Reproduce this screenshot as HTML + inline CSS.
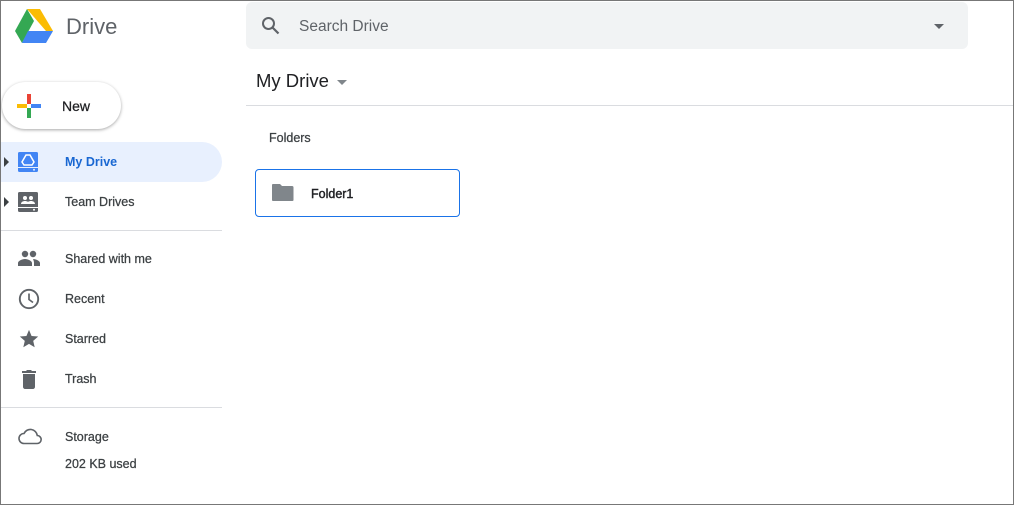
<!DOCTYPE html>
<html><head><meta charset="utf-8"><style>
*{margin:0;padding:0;box-sizing:border-box}
html,body{width:1014px;height:505px;overflow:hidden;background:#fff;font-family:"Liberation Sans",sans-serif}
.frame{position:absolute;left:0;top:0;width:1014px;height:505px;border:1px solid #777}
.abs{position:absolute}
.nav{position:absolute;left:65px;font-size:12.5px;color:#3c4043;-webkit-text-stroke:0.25px #3c4043}
.ic{position:absolute;left:18px}
</style></head><body>
<div class="frame"></div>
<svg class="abs" style="left:15px;top:9px" width="38" height="34" viewBox="0 0 38 34">
<polygon points="12,0 25,0 38,22 31,22" fill="#fbbc04"/>
<polygon points="12,0 19,12 7,34 0,22" fill="#34a853"/>
<polygon points="7,34 13,22 38,22 31,34" fill="#4285f4"/>
</svg>
<div class="abs" style="left:66px;top:14px;font-size:22px;color:#5f6368">Drive</div>
<div class="abs" style="left:2px;top:82px;width:119px;height:47px;border-radius:24px;background:#fff;box-shadow:0 1px 3px rgba(0,0,0,.35)"></div>
<svg class="abs" style="left:17px;top:94px" width="24" height="24" viewBox="0 0 24 24">
<rect x="10" y="0" width="4" height="10" fill="#ea4335"/>
<rect x="14" y="10" width="10" height="4" fill="#4285f4"/>
<rect x="10" y="14" width="4" height="10" fill="#34a853"/>
<rect x="0" y="10" width="10" height="4" fill="#fbbc04"/>
</svg>
<div class="abs" style="left:62px;top:98px;font-size:14px;color:#202124;-webkit-text-stroke:0.25px #202124">New</div>
<div class="abs" style="left:1px;top:142px;width:221px;height:40px;background:#e8f0fe;border-radius:0 20px 20px 0"></div>
<div class="abs" style="left:4px;top:157px;width:0;height:0;border-left:5px solid #3c4043;border-top:5px solid transparent;border-bottom:5px solid transparent"></div>
<svg class="ic" style="top:152px" width="20" height="20" viewBox="0 0 20 20">
<rect x="0" y="0" width="20" height="20" rx="1.5" fill="#4285f4"/>
<rect x="0" y="15" width="20" height="1" fill="#e8f0fe"/>
<circle cx="16" cy="17.7" r="1" fill="#e8f0fe"/>
<polygon points="8,3 12,3 16,10 14,13 6,13 4,10" fill="none" stroke="#fff" stroke-width="1.5"/>
</svg>
<div class="nav" style="top:155px;color:#1967d2;font-weight:bold;-webkit-text-stroke:0">My Drive</div>
<div class="abs" style="left:4px;top:197px;width:0;height:0;border-left:5px solid #3c4043;border-top:5px solid transparent;border-bottom:5px solid transparent"></div>
<svg class="ic" style="top:192px" width="20" height="20" viewBox="0 0 20 20">
<rect x="0" y="0" width="20" height="20" rx="1.5" fill="#5f6368"/>
<rect x="0" y="15" width="20" height="1" fill="#fff"/>
<circle cx="16" cy="17.7" r="1" fill="#fff"/>
<circle cx="7" cy="6" r="2" fill="#fff"/><circle cx="13" cy="6" r="2" fill="#fff"/>
<path d="M3 12c0-2 2-3 4-3s4 1 4 3zM9 12c0-2 2-3 4-3s4 1 4 3z" fill="#fff"/>
</svg>
<div class="nav" style="top:195px">Team Drives</div>
<div class="abs" style="left:1px;top:230px;width:221px;height:1px;background:#dadce0"></div>
<svg class="ic" style="top:250px" width="22" height="16" viewBox="0 0 22 16">
<circle cx="7" cy="4" r="3.2" fill="#5f6368"/><circle cx="15" cy="4" r="3.2" fill="#5f6368"/>
<path d="M0 16v-3c0-2 4-4 7-4s7 2 7 4v3zM15 9c3 0 7 2 7 4v3h-6v-3c0-1.5-.5-3-1-4z" fill="#5f6368"/>
</svg>
<div class="nav" style="top:252px">Shared with me</div>
<svg class="ic" style="top:288px" width="22" height="22" viewBox="0 0 22 22">
<circle cx="11" cy="11" r="9.2" fill="none" stroke="#5f6368" stroke-width="1.9"/>
<path d="M11 5.5v6l4 3" fill="none" stroke="#5f6368" stroke-width="1.7"/>
</svg>
<div class="nav" style="top:292px">Recent</div>
<svg class="ic" style="top:328px" width="22" height="22" viewBox="0 0 24 24">
<path d="M12 17.3l6.2 3.7-1.6-7 5.4-4.7-7.2-.6L12 2 9.2 8.7 2 9.3l5.4 4.7-1.6 7z" fill="#5f6368"/>
</svg>
<div class="nav" style="top:332px">Starred</div>
<svg class="ic" style="top:368px" width="22" height="22" viewBox="0 0 22 22">
<path d="M4 3h4l1-1h4l1 1h4v2H4zM5 6h12v13c0 1-1 2-2 2H7c-1 0-2-1-2-2z" fill="#5f6368"/>
</svg>
<div class="nav" style="top:372px">Trash</div>
<div class="abs" style="left:1px;top:407px;width:221px;height:1px;background:#dadce0"></div>
<svg class="ic" style="top:427px" width="24" height="18" viewBox="0 0 24 18">
<path d="M6 16.5h13a4 4 0 0 0 .3-8A7 7 0 0 0 6 6.5a5 5 0 0 0 0 10z" fill="none" stroke="#5f6368" stroke-width="1.6"/>
</svg>
<div class="nav" style="top:430px">Storage</div>
<div class="nav" style="top:457px">202 KB used</div>
<div class="abs" style="left:246px;top:2px;width:722px;height:47px;background:#f1f3f4;border-radius:6px"></div>
<svg class="abs" style="left:261px;top:16px" width="20" height="20" viewBox="0 0 20 20">
<circle cx="7.5" cy="7.5" r="5.5" fill="none" stroke="#5f6368" stroke-width="2"/>
<path d="M11.5 11.5l6 6" stroke="#5f6368" stroke-width="2.2"/>
</svg>
<div class="abs" style="left:299px;top:18px;font-size:15.5px;color:#5f6368">Search Drive</div>
<div class="abs" style="left:934px;top:24px;border-top:5px solid #5f6368;border-left:5px solid transparent;border-right:5px solid transparent"></div>
<div class="abs" style="left:256px;top:70px;font-size:18.5px;color:#202124">My Drive</div>
<div class="abs" style="left:337px;top:80px;border-top:5px solid #80868b;border-left:5px solid transparent;border-right:5px solid transparent"></div>
<div class="abs" style="left:246px;top:105px;width:767px;height:1px;background:#dadce0"></div>
<div class="abs" style="left:269px;top:131px;font-size:12.5px;color:#3c4043;-webkit-text-stroke:0.25px #3c4043">Folders</div>
<div class="abs" style="left:255px;top:169px;width:205px;height:48px;border:1px solid #1a73e8;border-radius:4px"></div>
<svg class="abs" style="left:272px;top:184px" width="22" height="17" viewBox="0 0 22 17">
<path d="M1 0h7l2 2h10c1 0 1.5.5 1.5 1.5V16c0 .6-.4 1-1 1H1c-.6 0-1-.4-1-1V1c0-.6.4-1 1-1z" fill="#80868b"/>
</svg>
<div class="abs" style="left:311px;top:187px;font-size:12.5px;color:#202124;-webkit-text-stroke:0.4px #202124">Folder1</div>
</body></html>
